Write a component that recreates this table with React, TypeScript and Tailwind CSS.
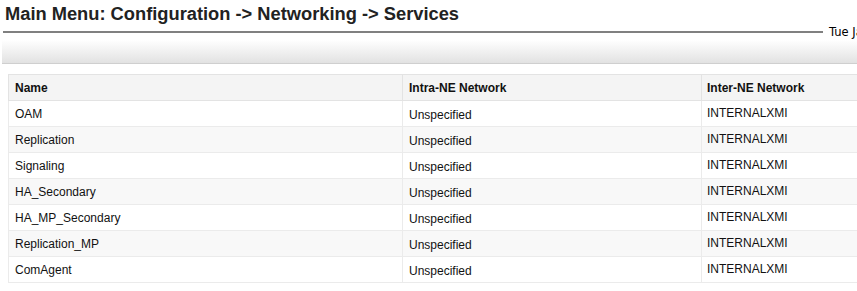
import React from "react";

const rows = [
  ["OAM", "Unspecified", "INTERNALXMI"],
  ["Replication", "Unspecified", "INTERNALXMI"],
  ["Signaling", "Unspecified", "INTERNALXMI"],
  ["HA_Secondary", "Unspecified", "INTERNALXMI"],
  ["HA_MP_Secondary", "Unspecified", "INTERNALXMI"],
  ["Replication_MP", "Unspecified", "INTERNALXMI"],
  ["ComAgent", "Unspecified", "INTERNALXMI"],
];

export default function App() {
  return (
    <div className="w-[857px] h-[291px] overflow-hidden bg-white">
      <div className="w-[1100px]" style={{ fontFamily: '"Liberation Sans", Arial, sans-serif' }}>
        <div className="h-[26px] pl-[5px] pt-[3px] text-[18.3px] font-bold leading-[22px] text-[#222]">
          Main Menu: Configuration -&gt; Networking -&gt; Services
        </div>
        <div className="flex items-center h-[12px] pl-[3px]">
          <div className="w-[820px] shrink-0 h-[2px] bg-[#808080]" />
          <div
            className="ml-[6px] text-[11.5px] leading-[12px] text-black whitespace-nowrap"
            style={{ fontFamily: '"DejaVu Sans", Verdana, sans-serif' }}
          >
            Tue Jan 10 12:00:00 2012 UTC
          </div>
        </div>
        <div className="h-[2px]" />
        <div className="ml-[2px] h-[24px] bg-gradient-to-b from-[#ffffff] to-[#e2e2e2] border-b border-[#cfcfcf]" />
        <div className="h-[10px]" />
        <table className="ml-[8px] w-[900px] border-collapse text-[12px] text-[#111]">
          <colgroup>
            <col className="w-[394px]" />
            <col className="w-[299px]" />
            <col />
          </colgroup>
          <thead>
            <tr className="h-[26px] bg-[#f4f4f4]">
              <th className="border border-[#e3e3e3] px-[6px] text-left font-bold">Name</th>
              <th className="border border-[#e3e3e3] px-[6px] text-left font-bold">Intra-NE Network</th>
              <th className="border border-[#e3e3e3] px-[5px] text-left font-bold">Inter-NE Network</th>
            </tr>
          </thead>
          <tbody>
            {rows.map((r, i) => (
              <tr key={i} className={`h-[26px] ${i % 2 === 1 ? "bg-[#f8f8f8]" : "bg-white"}`}>
                <td className="border border-[#ebebeb] px-[6px] pt-[1px] align-middle">{r[0]}</td>
                <td className="border border-[#ebebeb] px-[6px] pt-[3px] align-middle">{r[1]}</td>
                <td className="border border-[#ebebeb] px-[5px] pb-[1px] align-middle">{r[2]}</td>
              </tr>
            ))}
          </tbody>
        </table>
      </div>
    </div>
  );
}
